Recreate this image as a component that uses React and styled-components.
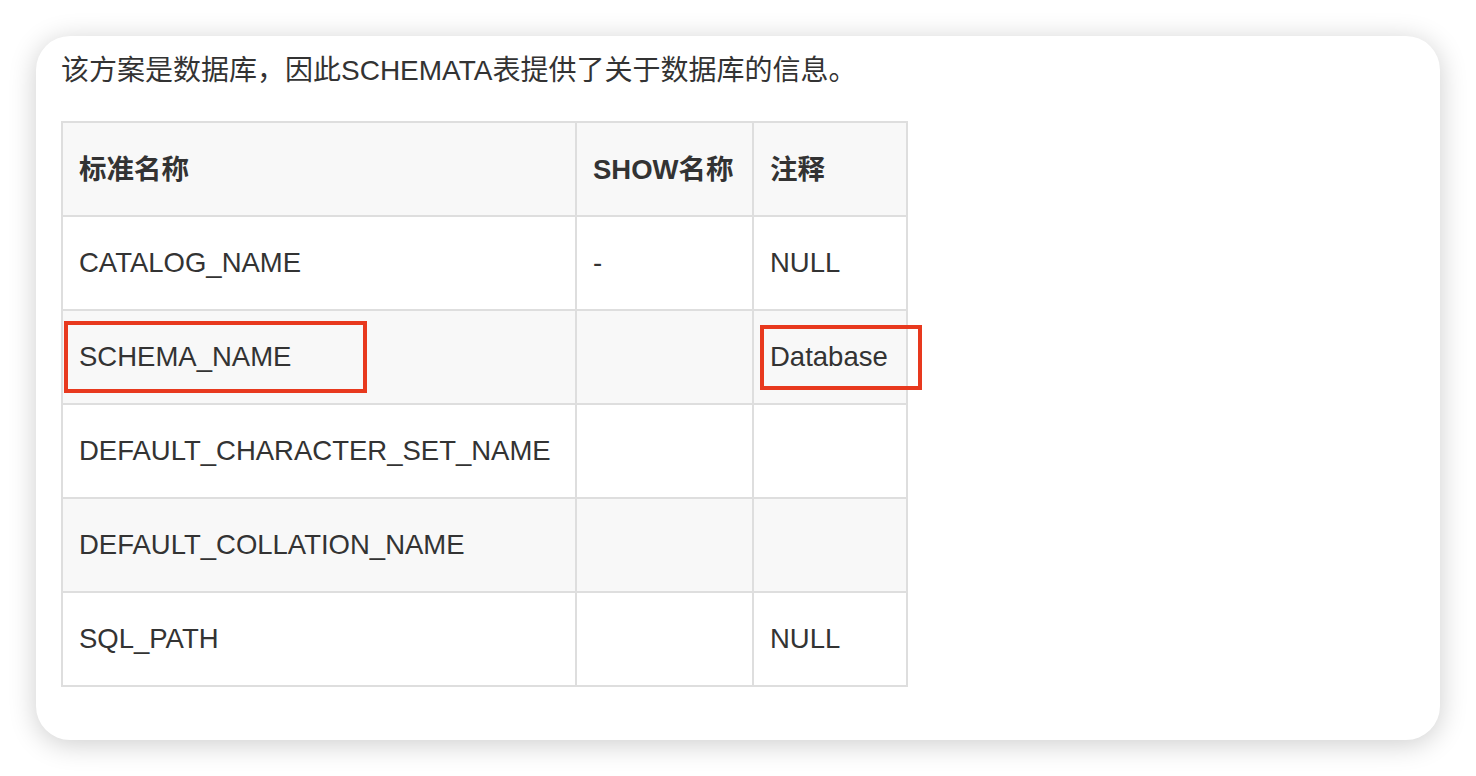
import React from 'react';
import styled, {createGlobalStyle} from 'styled-components';

const GlobalStyle = createGlobalStyle`
  html, body {
    margin: 0;
    padding: 0;
    background: #ffffff;
  }
  body {
    font-family: "Liberation Sans", "Noto Sans CJK SC", sans-serif;
    color: #333;
  }
`;

const Page = styled.div`
  width: 1476px;
  height: 776px;
  padding: 36px 0 0 36px;
  box-sizing: border-box;
`;

const Card = styled.div`
  width: 1404px;
  height: 704px;
  box-sizing: border-box;
  background: #fff;
  border-radius: 34px;
  box-shadow: 0 4px 28px rgba(0, 0, 0, 0.2);
  padding: 15px 25px;
`;

const Lead = styled.p`
  margin: 0 0 30px;
  font-size: 28px;
  line-height: 40px;
  color: #333;
`;

const Table = styled.table`
  border-collapse: collapse;
  table-layout: fixed;
  width: 845px;
  font-size: 27.5px;
  color: #333;
`;

const Row = styled.tr`
  height: 94px;
  background: ${p => (p.$shaded ? '#f8f8f8' : '#fff')};
`;

const Head = styled.th`
  border: 2px solid #dedede;
  padding: 0 16px 5px;
  text-align: left;
  font-weight: bold;
  white-space: nowrap;
`;

const Cell = styled.td`
  position: relative;
  border: 2px solid #dedede;
  padding: 0 16px;
  white-space: nowrap;
`;

// red annotation box drawn over a cell
const Mark = styled.span`
  position: absolute;
  top: ${p => p.$top}px;
  left: ${p => p.$left}px;
  width: ${p => p.$width}px;
  height: ${p => p.$height}px;
  box-sizing: border-box;
  border: 4px solid #e8391e;
  pointer-events: none;
`;

const rows = [
  {name: 'CATALOG_NAME', show: '-', note: 'NULL'},
  {name: 'SCHEMA_NAME', show: '', note: 'Database', marked: true},
  {name: 'DEFAULT_CHARACTER_SET_NAME', show: '', note: ''},
  {name: 'DEFAULT_COLLATION_NAME', show: '', note: ''},
  {name: 'SQL_PATH', show: '', note: 'NULL'},
];

export default function App() {
  return (
    <Page>
      <GlobalStyle/>
      <Card>
        <Lead>该方案是数据库，因此SCHEMATA表提供了关于数据库的信息。</Lead>
        <Table>
          <colgroup>
            <col style={{width: 514}}/>
            <col style={{width: 177}}/>
            <col style={{width: 154}}/>
          </colgroup>
          <thead>
            <Row $shaded>
              <Head>标准名称</Head>
              <Head>SHOW名称</Head>
              <Head>注释</Head>
            </Row>
          </thead>
          <tbody>
            {rows.map((r, i) => (
              <Row key={r.name} $shaded={i % 2 === 1}>
                <Cell>
                  {r.name}
                  {r.marked && <Mark $top={10} $left={1} $width={303} $height={72}/>}
                </Cell>
                <Cell>{r.show}</Cell>
                <Cell>
                  {r.note}
                  {r.marked && <Mark $top={14} $left={6} $width={162} $height={65}/>}
                </Cell>
              </Row>
            ))}
          </tbody>
        </Table>
      </Card>
    </Page>
  );
}
